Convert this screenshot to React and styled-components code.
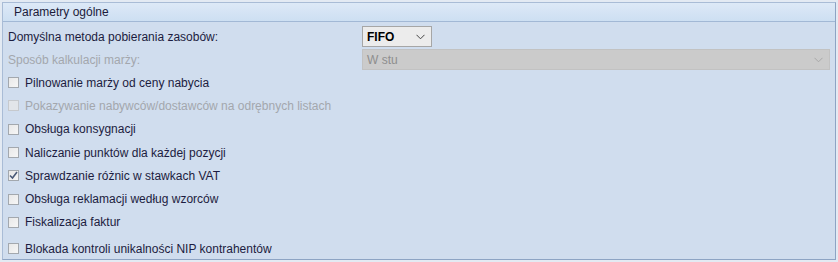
import React from 'react';
import styled, { createGlobalStyle } from 'styled-components';

const GlobalStyle = createGlobalStyle`
  html, body {
    margin: 0;
    padding: 0;
    background: #e3eaf3;
  }
  body {
    font-family: 'Segoe UI', 'Liberation Sans', sans-serif;
  }
`;

const Page = styled.div`
  width: 838px;
  height: 262px;
  padding: 2px;
  box-sizing: border-box;
`;

const Group = styled.section`
  width: 834px;
  height: 258px;
  box-sizing: border-box;
  border: 1px solid #8da4c4;
  border-left-color: #a9bcd6;
  border-top-color: #a9bcd6;
  background: #d0ddee;
  display: flex;
  flex-direction: column;
`;

const Header = styled.div`
  height: 18px;
  line-height: 18px;
  padding-left: 11px;
  font-size: 12px;
  color: #1b1b3a;
  background: linear-gradient(#dde9f7, #cddff2);
  border-bottom: 1px solid #a2b8d5;
`;

const Body = styled.div`
  display: flex;
  flex-direction: column;
  padding: 3px 4px 0 4px;
`;

const FieldRow = styled.div`
  display: grid;
  grid-template-columns: 355px 1fr;
  align-items: center;
  height: 23px;
`;

const Label = styled.span`
  font-size: 12px;
  color: ${p => (p.$disabled ? '#a3a7ad' : '#1c1c40')};
  padding-left: 1px;
`;

const Combo = styled.div`
  width: ${p => p.$width};
  height: 21px;
  box-sizing: border-box;
  border: 1px solid ${p => (p.$disabled ? '#c2c2c2' : '#a6a6a6')};
  background: ${p => (p.$disabled ? '#cbcbcb' : '#ececec')};
  display: flex;
  align-items: center;
  justify-content: space-between;
  padding: 0 6px 0 4px;
  font-size: 12px;
  color: ${p => (p.$disabled ? '#8e8e8e' : '#000')};
  font-weight: ${p => (p.$disabled ? 400 : 600)};
`;

const CheckRow = styled.label`
  display: flex;
  align-items: center;
  gap: 6px;
  height: 23.3px;
  margin-top: ${p => p.$gap || 0}px;
  font-size: 12px;
  color: ${p => (p.$disabled ? '#a3a7ad' : '#1c1c40')};
`;

const Box = styled.span`
  width: 11px;
  height: 11px;
  margin-left: 1px;
  box-sizing: border-box;
  border: 1px solid ${p => (p.$disabled ? '#c6c9cd' : '#a3a8ae')};
  background: ${p =>
    p.$disabled ? '#e2e5e9' : 'linear-gradient(135deg, #e8e8e8, #f6f6f6)'};
  display: flex;
  align-items: center;
  justify-content: center;
`;

const Chevron = ({ color }) => (
  <svg width="9" height="6" viewBox="0 0 9 6">
    <path d="M0.5 0.8 L4.5 4.8 L8.5 0.8" fill="none" stroke={color} strokeWidth="1" />
  </svg>
);

const Tick = () => (
  <svg width="9" height="9" viewBox="0 0 9 9">
    <path d="M1 4.5 L3.5 7 L8 1" fill="none" stroke="#4a5a78" strokeWidth="1.6" />
  </svg>
);

const options = [
  { text: 'Pilnowanie marży od ceny nabycia' },
  { text: 'Pokazywanie nabywców/dostawców na odrębnych listach', disabled: true },
  { text: 'Obsługa konsygnacji' },
  { text: 'Naliczanie punktów dla każdej pozycji' },
  { text: 'Sprawdzanie różnic w stawkach VAT', checked: true },
  { text: 'Obsługa reklamacji według wzorców' },
  { text: 'Fiskalizacja faktur' },
  { text: 'Blokada kontroli unikalności NIP kontrahentów', gap: 3 },
];

export default function App() {
  return (
    <>
      <GlobalStyle />
      <Page>
        <Group>
          <Header>Parametry ogólne</Header>
          <Body>
            <FieldRow>
              <Label>Domyślna metoda pobierania zasobów:</Label>
              <Combo $width="70px">
                FIFO
                <Chevron color="#444" />
              </Combo>
            </FieldRow>
            <FieldRow>
              <Label $disabled>Sposób kalkulacji marży:</Label>
              <Combo $width="468px" $disabled>
                W stu
                <Chevron color="#a8a8a8" />
              </Combo>
            </FieldRow>
            {options.map(o => (
              <CheckRow key={o.text} $disabled={o.disabled} $gap={o.gap}>
                <Box $disabled={o.disabled}>{o.checked && <Tick />}</Box>
                {o.text}
              </CheckRow>
            ))}
          </Body>
        </Group>
      </Page>
    </>
  );
}
